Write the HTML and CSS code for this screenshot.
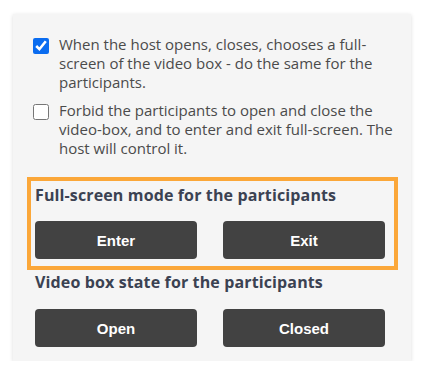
FILE: index.html
```html
<!DOCTYPE html>
<html lang="en">
<head>
<meta charset="utf-8">
<title>Video box settings</title>
<link rel="stylesheet" href="styles.css">
</head>
<body>
<div class="card">
  <label class="row">
    <input type="checkbox" class="check" checked>
    <span class="row-text">When the host opens, closes, chooses a full-screen of the video box - do the same for the participants.</span>
  </label>
  <label class="row row-second">
    <input type="checkbox" class="check">
    <span class="row-text">Forbid the participants to open and close the video-box, and to enter and exit full-screen. The host will control it.</span>
  </label>
  <section class="group group-highlight">
    <h3 class="group-title">Full-screen mode for the participants</h3>
    <div class="btns">
      <button class="btn">Enter</button>
      <button class="btn">Exit</button>
    </div>
  </section>
  <section class="group group-plain">
    <h3 class="group-title">Video box state for the participants</h3>
    <div class="btns">
      <button class="btn">Open</button>
      <button class="btn">Closed</button>
    </div>
  </section>
</div>
</body>
</html>
```
FILE: styles.css
```css
* { box-sizing: border-box; }
html, body { margin: 0; padding: 0; background: #ffffff; }
body { font-family: "Open Sans", "Liberation Sans", sans-serif; }

.card {
  margin: 14px 13px 0 13px;
  width: 398px;
  background: #f5f5f5;
  box-shadow: 0 1px 4px rgba(0, 0, 0, 0.14);
  padding: 21px 13px 14px 20px;
}

.row {
  display: flex;
  align-items: flex-start;
  gap: 10px;
  font-size: 15px;
  line-height: 19px;
  color: #4b4b4b;
}
.row-second { margin-top: 9px; }

.check {
  flex: none;
  width: 16px;
  height: 16px;
  margin: 3px 0 0 0;
  accent-color: #0a6cf0;
}

.row-text { flex: 1; }

.group-title {
  margin: 0 0 16px 0;
  font-size: 16px;
  line-height: 20px;
  font-weight: 700;
  letter-spacing: 0.13px;
  color: #3b4252;
}

.group-highlight {
  margin: 19px 0 0 -6px;
  border: 4px solid #fba739;
  padding: 4px 9px 7px 4px;
}

.group-plain {
  margin-top: 2px;
  padding: 0 13px 0 2px;
}
.group-plain .group-title { margin-bottom: 17px; }

.btns {
  display: grid;
  grid-template-columns: 1fr 1fr;
  column-gap: 26px;
}

.btn {
  height: 38px;
  border: 0;
  border-radius: 4px;
  background: #424242;
  color: #ffffff;
  font-family: "Liberation Sans", Arial, sans-serif;
  font-weight: 700;
  font-size: 15px;
  padding: 0;
}
```
